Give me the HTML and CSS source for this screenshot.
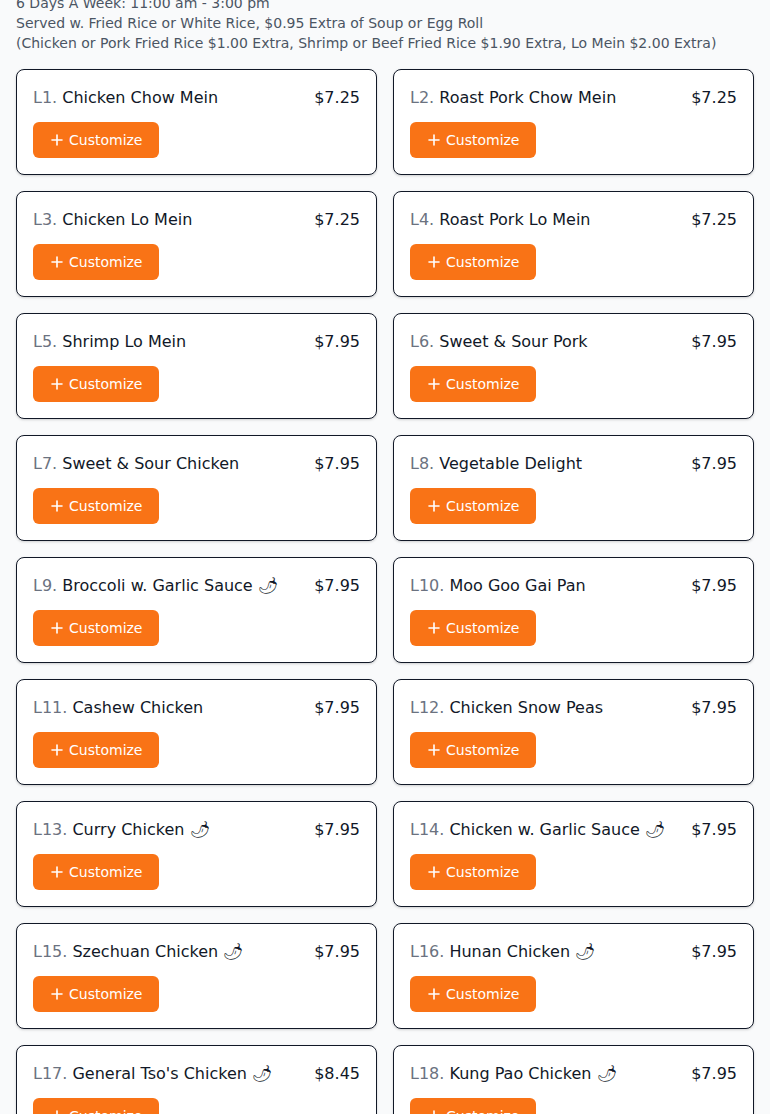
FILE: index.html
```html
<!DOCTYPE html>
<html lang="en">
<head>
<meta charset="utf-8">
<title>Lunch Specials</title>
<link rel="stylesheet" href="styles.css">
</head>
<body>
<div class="page">
  <div class="intro">
    <p>6 Days A Week: 11:00 am - 3:00 pm</p>
    <p>Served w. Fried Rice or White Rice, $0.95 Extra of Soup or Egg Roll</p>
    <p>(Chicken or Pork Fried Rice $1.00 Extra, Shrimp or Beef Fried Rice $1.90 Extra, Lo Mein $2.00 Extra)</p>
  </div>
  <div class="grid">
    <div class="card"><div class="row"><span class="name"><span class="num">L1.</span> Chicken Chow Mein</span><span class="price">$7.25</span></div><button class="btn"><svg viewBox="0 0 16 16" width="16" height="16"><path d="M8 3v10M3 8h10" stroke="#fff" stroke-width="1.6" stroke-linecap="round"/></svg>Customize</button></div>
    <div class="card"><div class="row"><span class="name"><span class="num">L2.</span> Roast Pork Chow Mein</span><span class="price">$7.25</span></div><button class="btn"><svg viewBox="0 0 16 16" width="16" height="16"><path d="M8 3v10M3 8h10" stroke="#fff" stroke-width="1.6" stroke-linecap="round"/></svg>Customize</button></div>
    <div class="card"><div class="row"><span class="name"><span class="num">L3.</span> Chicken Lo Mein</span><span class="price">$7.25</span></div><button class="btn"><svg viewBox="0 0 16 16" width="16" height="16"><path d="M8 3v10M3 8h10" stroke="#fff" stroke-width="1.6" stroke-linecap="round"/></svg>Customize</button></div>
    <div class="card"><div class="row"><span class="name"><span class="num">L4.</span> Roast Pork Lo Mein</span><span class="price">$7.25</span></div><button class="btn"><svg viewBox="0 0 16 16" width="16" height="16"><path d="M8 3v10M3 8h10" stroke="#fff" stroke-width="1.6" stroke-linecap="round"/></svg>Customize</button></div>
    <div class="card"><div class="row"><span class="name"><span class="num">L5.</span> Shrimp Lo Mein</span><span class="price">$7.95</span></div><button class="btn"><svg viewBox="0 0 16 16" width="16" height="16"><path d="M8 3v10M3 8h10" stroke="#fff" stroke-width="1.6" stroke-linecap="round"/></svg>Customize</button></div>
    <div class="card"><div class="row"><span class="name"><span class="num">L6.</span> Sweet &amp; Sour Pork</span><span class="price">$7.95</span></div><button class="btn"><svg viewBox="0 0 16 16" width="16" height="16"><path d="M8 3v10M3 8h10" stroke="#fff" stroke-width="1.6" stroke-linecap="round"/></svg>Customize</button></div>
    <div class="card"><div class="row"><span class="name"><span class="num">L7.</span> Sweet &amp; Sour Chicken</span><span class="price">$7.95</span></div><button class="btn"><svg viewBox="0 0 16 16" width="16" height="16"><path d="M8 3v10M3 8h10" stroke="#fff" stroke-width="1.6" stroke-linecap="round"/></svg>Customize</button></div>
    <div class="card"><div class="row"><span class="name"><span class="num">L8.</span> Vegetable Delight</span><span class="price">$7.95</span></div><button class="btn"><svg viewBox="0 0 16 16" width="16" height="16"><path d="M8 3v10M3 8h10" stroke="#fff" stroke-width="1.6" stroke-linecap="round"/></svg>Customize</button></div>
    <div class="card"><div class="row"><span class="name"><span class="num">L9.</span> Broccoli w. Garlic Sauce 🌶</span><span class="price">$7.95</span></div><button class="btn"><svg viewBox="0 0 16 16" width="16" height="16"><path d="M8 3v10M3 8h10" stroke="#fff" stroke-width="1.6" stroke-linecap="round"/></svg>Customize</button></div>
    <div class="card"><div class="row"><span class="name"><span class="num">L10.</span> Moo Goo Gai Pan</span><span class="price">$7.95</span></div><button class="btn"><svg viewBox="0 0 16 16" width="16" height="16"><path d="M8 3v10M3 8h10" stroke="#fff" stroke-width="1.6" stroke-linecap="round"/></svg>Customize</button></div>
    <div class="card"><div class="row"><span class="name"><span class="num">L11.</span> Cashew Chicken</span><span class="price">$7.95</span></div><button class="btn"><svg viewBox="0 0 16 16" width="16" height="16"><path d="M8 3v10M3 8h10" stroke="#fff" stroke-width="1.6" stroke-linecap="round"/></svg>Customize</button></div>
    <div class="card"><div class="row"><span class="name"><span class="num">L12.</span> Chicken Snow Peas</span><span class="price">$7.95</span></div><button class="btn"><svg viewBox="0 0 16 16" width="16" height="16"><path d="M8 3v10M3 8h10" stroke="#fff" stroke-width="1.6" stroke-linecap="round"/></svg>Customize</button></div>
    <div class="card"><div class="row"><span class="name"><span class="num">L13.</span> Curry Chicken 🌶</span><span class="price">$7.95</span></div><button class="btn"><svg viewBox="0 0 16 16" width="16" height="16"><path d="M8 3v10M3 8h10" stroke="#fff" stroke-width="1.6" stroke-linecap="round"/></svg>Customize</button></div>
    <div class="card"><div class="row"><span class="name"><span class="num">L14.</span> Chicken w. Garlic Sauce 🌶</span><span class="price">$7.95</span></div><button class="btn"><svg viewBox="0 0 16 16" width="16" height="16"><path d="M8 3v10M3 8h10" stroke="#fff" stroke-width="1.6" stroke-linecap="round"/></svg>Customize</button></div>
    <div class="card"><div class="row"><span class="name"><span class="num">L15.</span> Szechuan Chicken 🌶</span><span class="price">$7.95</span></div><button class="btn"><svg viewBox="0 0 16 16" width="16" height="16"><path d="M8 3v10M3 8h10" stroke="#fff" stroke-width="1.6" stroke-linecap="round"/></svg>Customize</button></div>
    <div class="card"><div class="row"><span class="name"><span class="num">L16.</span> Hunan Chicken 🌶</span><span class="price">$7.95</span></div><button class="btn"><svg viewBox="0 0 16 16" width="16" height="16"><path d="M8 3v10M3 8h10" stroke="#fff" stroke-width="1.6" stroke-linecap="round"/></svg>Customize</button></div>
    <div class="card"><div class="row"><span class="name"><span class="num">L17.</span> General Tso's Chicken 🌶</span><span class="price">$8.45</span></div><button class="btn"><svg viewBox="0 0 16 16" width="16" height="16"><path d="M8 3v10M3 8h10" stroke="#fff" stroke-width="1.6" stroke-linecap="round"/></svg>Customize</button></div>
    <div class="card"><div class="row"><span class="name"><span class="num">L18.</span> Kung Pao Chicken 🌶</span><span class="price">$7.95</span></div><button class="btn"><svg viewBox="0 0 16 16" width="16" height="16"><path d="M8 3v10M3 8h10" stroke="#fff" stroke-width="1.6" stroke-linecap="round"/></svg>Customize</button></div>
  </div>
</div>
</body>
</html>
```

FILE: styles.css
```css
* { box-sizing: border-box; }
html, body { margin: 0; padding: 0; background: #f9fafb; }
body { font-family: "DejaVu Sans", sans-serif; color: #111827; }
.page {
  margin-top: -7px;
  padding: 0 16px 40px;
  display: flex;
  flex-direction: column;
  gap: 16px;
}
.intro p {
  margin: 0;
  font-size: 14px;
  line-height: 20px;
  color: #4b5563;
}
.grid {
  display: grid;
  grid-template-columns: 1fr 1fr;
  gap: 16px;
}
.card {
  background: #fff;
  border: 1px solid #111827;
  border-radius: 8px;
  padding: 16px;
  box-shadow: 0 1px 3px rgba(0,0,0,0.12), 0 1px 2px rgba(0,0,0,0.06);
  display: flex;
  flex-direction: column;
  align-items: flex-start;
  gap: 12px;
}
.row {
  width: 100%;
  display: flex;
  justify-content: space-between;
  align-items: flex-start;
  font-size: 16px;
  line-height: 24px;
}
.num { color: #6b7280; }
.name { color: #111827; }
.price { color: #111827; }
.btn {
  height: 36px;
  padding: 0 16px;
  border: none;
  border-radius: 6px;
  background: #f97316;
  color: #fff;
  font-family: "DejaVu Sans", sans-serif;
  font-size: 14px;
  display: inline-flex;
  align-items: center;
  gap: 4px;
  cursor: pointer;
}
.btn svg { display: block; }
```
